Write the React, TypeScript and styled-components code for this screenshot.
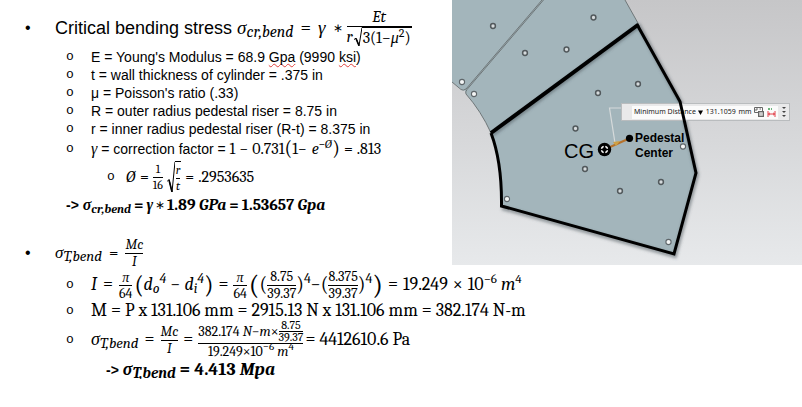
import React from 'react';
import styled, { createGlobalStyle } from 'styled-components';

const sans = '"Liberation Sans", Arial, sans-serif';
const serif = 'Cambria, Caladea, "Liberation Serif", serif';

const GlobalStyle = createGlobalStyle`
  *, *::before, *::after { box-sizing: border-box; }
  body { margin: 0; background: #fff; color: #000; font-family: ${sans}; }
`;

/* ---------- page ---------- */

const Page = styled.main`
  display: flex;
  flex-direction: column;
`;

const Top = styled.div`
  display: grid;
  grid-template-columns: minmax(452px, 56%) 1fr;
`;

const Notes = styled.ul`
  display: flex;
  flex-direction: column;
  margin: 0;
  padding: 8px 0 0 25px;
  list-style: none;
`;

const Details = styled.ul<{ $indent: number }>`
  margin: 0;
  padding: 0 0 0 ${p => p.$indent}px;
  list-style: none;
`;

const Item = styled.li<{ $h: number; $size?: number; $serif?: boolean; $before?: number }>`
  display: flex;
  align-items: center;
  height: ${p => p.$h}px;
  margin-top: ${p => p.$before ?? 0}px;
  font-size: ${p => p.$size ?? 14}px;
  line-height: 18px;
  font-family: ${p => (p.$serif ? serif : sans)};
  white-space: pre;
`;

const Dot = styled.span`
  flex: 0 0 30px;
  font: 16px/18px ${sans};
`;

const Ring = styled.span<{ $w?: number }>`
  flex: 0 0 ${p => p.$w ?? 25}px;
  font: 13px/16px "Liberation Mono", monospace;
`;

const Result = styled.p<{ $indent: number; $size: number; $h: number }>`
  display: flex;
  align-items: center;
  height: ${p => p.$h}px;
  margin: 0;
  padding-left: ${p => p.$indent}px;
  font: bold ${p => p.$size}px/18px ${serif};
  white-space: pre;
`;

const Arrow = styled.span`
  font: bold 14px/18px ${sans};
`;

const Misspelt = styled.span`
  text-decoration: underline wavy #e0403c 1px;
  text-underline-offset: 1px;
  text-decoration-skip-ink: none;
`;

/* ---------- mathematics ---------- */

const Math = styled.span<{ $size: number }>`
  display: inline-flex;
  align-items: center;
  font-family: ${serif};
  font-size: ${p => p.$size}px;
  line-height: 18px;
`;

const Sub = styled.sub<{ $size?: number }>`
  font-size: ${p => p.$size ?? 15}px;
  line-height: 0;
  vertical-align: -3px;
`;

const Sup = styled.sup<{ $size?: number }>`
  font-size: ${p => p.$size ?? 13}px;
  line-height: 0;
`;

const Op = styled.span<{ $gap?: number }>`
  margin: 0 ${p => p.$gap ?? 4}px;
  font-style: normal;
`;

const Star = styled.span<{ $gap?: number }>`
  margin: 0 ${p => p.$gap ?? 4}px;
  font-size: 12px;
  font-weight: normal;
`;

const Gap = styled.span<{ $w: number }>`
  width: ${p => p.$w}px;
`;

const Fraction = styled.span<{ $size: number; $line: number }>`
  display: inline-flex;
  flex-direction: column;
  align-items: stretch;
  text-align: center;
  font-size: ${p => p.$size}px;
  line-height: ${p => p.$line}px;
`;

const Over = styled.span`
  display: flex;
  justify-content: center;
  align-items: center;
  border-bottom: 1px solid #000;
`;

const Under = styled.span`
  display: flex;
  justify-content: center;
  align-items: center;
`;

const Paren = styled.span<{ $size: number }>`
  font-size: ${p => p.$size}px;
  line-height: 18px;
  font-style: normal;
  font-weight: normal;
`;

const Root = styled.span`
  display: inline-flex;
  align-items: stretch;
`;

const RootSign = styled.svg`
  width: 8px;
  height: auto;
  flex: none;
`;

const Radicand = styled.span`
  display: inline-flex;
  align-items: center;
  padding: 1px 1px 0;
  border-top: 1px solid #000;
`;

function Frac({ size, line, over, under }: { size: number; line: number; over: React.ReactNode; under: React.ReactNode }) {
  return (
    <Fraction $size={size} $line={line}>
      <Over>{over}</Over>
      <Under>{under}</Under>
    </Fraction>
  );
}

function Sqrt({ children }: { children: React.ReactNode }) {
  return (
    <Root>
      <RootSign viewBox="0 0 8 20" preserveAspectRatio="none" aria-hidden="true">
        <path d="M0 12.5 L2 11.2 L5 18.8 L8 0.5" fill="none" stroke="#000" strokeWidth="1" vectorEffect="non-scaling-stroke" />
        <path d="M2 11.5 L5 18.6" fill="none" stroke="#000" strokeWidth="1.6" vectorEffect="non-scaling-stroke" />
      </RootSign>
      <Radicand>{children}</Radicand>
    </Root>
  );
}

/* ---------- figure ---------- */

const Figure = styled.figure`
  margin: 0;
  height: 265px;
  overflow: hidden;
  background: linear-gradient(#c6c6c8, #d6d7d9 50%, #e7e9eb);
`;

const Canvas = styled.div`
  position: relative;
  width: 350px;
  height: 265px;
`;

const Layer = styled.svg`
  position: absolute;
  inset: 0;
  width: 100%;
  height: 100%;
  pointer-events: none;
`;

const MeasureBar = styled.div`
  position: absolute;
  left: 169px;
  top: 103px;
  display: flex;
  align-items: center;
  width: 169px;
  height: 18px;
  padding: 0 3px 0 2px;
  gap: 4px;
  border: 1px solid #b9bcbe;
  background: #e9e9ea;
  font: 7px/12px "Noto Sans", sans-serif;
  color: #222;
`;

const Grip = styled.span`
  flex: none;
  width: 4px;
  height: 14px;
  background: radial-gradient(circle, #a5a7a9 40%, transparent 50%) 0 0 / 2px 2px;
`;

const Fields = styled.div`
  flex: 1;
  display: flex;
  align-items: center;
  justify-content: space-between;
  height: 13px;
  padding: 0 2px;
  background: #fbfbfb;
`;

const Picker = styled.label`
  display: flex;
  align-items: center;
  gap: 2px;
`;

const Select = styled.select`
  appearance: none;
  margin: 0;
  padding: 0;
  border: 0;
  background: none;
  color: inherit;
  font: inherit;
`;

const IconButton = styled.button`
  display: flex;
  padding: 0;
  border: 0;
  background: none;
`;

const holes = [
  [493, 26], [525, 53], [593.5, 17.5], [566.5, 49.5], [598, 93], [575.5, 128.5], [638, 84],
  [585, 169], [620, 191], [661, 182],
];
const cornerHoles = [[462, 82], [474, 94], [507, 199], [683, 146.5], [668.5, 242]];

function Drawing() {
  return (
    <Figure>
      <Canvas>
        <Layer viewBox="452 0 350 265" aria-hidden="true">
          <defs>
            <filter id="shade" x="-10%" y="-10%" width="120%" height="120%">
              <feGaussianBlur stdDeviation="1.6" />
            </filter>
          </defs>
          <path d="M452 0H625L638.5 24L680 101L696 173L674 254L501.5 206Q502 165 491 133Q481 111 466 94L465 90.500Q463 91 461 89L452 82Z" fill="#a3b5bb" />
          <path d="M452 82L461 89.500Q463 91 466 89L542 0M543.500 0L467 89.500Q465 92 466 94Q481 111 491 133M625 0L638.500 24" fill="none" stroke="#6f7779" strokeWidth="1" />
          <path d="M492 135L639 26L681 103L697 175L675 256L502 208" fill="none" stroke="#4d585c" strokeOpacity=".55" strokeWidth="4" filter="url(#shade)" />
          {holes.map(([x, y]) => (
            <circle key={`${x}-${y}`} cx={x} cy={y} r="2.400" fill="#d5dadc" stroke="#52595c" strokeWidth="1.500" />
          ))}
          {cornerHoles.map(([x, y]) => (
            <circle key={`${x}-${y}`} cx={x} cy={y} r="2.600" fill="#f4f6f6" stroke="#5f666a" strokeWidth="1.100" />
          ))}
          <path d="M622 108H609.500L615 143" fill="none" stroke="#d6dadb" strokeWidth="1.200" />
        </Layer>
        <MeasureBar>
          <Grip />
          <Fields>
            <Picker>
              <Select aria-label="Measurement">
                <option>Minimum Distance</option>
              </Select>
              <svg width="5" height="5" viewBox="0 0 5 5" aria-hidden="true"><path d="M0 .5H5L2.500 5Z" fill="#000" /></svg>
            </Picker>
            <span>131.1059</span>
            <span>mm</span>
            <IconButton aria-label="Copy value">
              <svg width="10" height="10" viewBox="0 0 10 10" fill="none" stroke="#666">
                <path d="M.5 .5H8.500V5.500H.5ZM2 4V2H4M5.500 2H7" />
                <rect x="4.500" y="4.500" width="5" height="5" fill="#aaa" />
                <path d="M5 7H9M7 5V9" stroke="#eee" strokeWidth=".6" />
              </svg>
            </IconButton>
            <IconButton aria-label="Show dimension">
              <svg width="9" height="9" viewBox="0 0 9 9" fill="none">
                <path d="M1 3V9M8 3V9M1 6H8M3 4.800L1.500 6L3 7.200M6 4.800L7.500 6L6 7.200" stroke="#e2414b" />
                <path d="M1 1H3M4 1H5" stroke="#3d9a50" strokeWidth="1.400" />
              </svg>
            </IconButton>
          </Fields>
          <svg width="4" height="12" viewBox="0 0 4 12" aria-hidden="true">
            <path d="M0 1H4L2 3ZM0 5H4L2 7ZM0 9H4L2 11Z" fill="#444" />
          </svg>
        </MeasureBar>
        <Layer viewBox="452 0 350 265" role="img" aria-label="Panel with centre of gravity and pedestal centre">
          <path d="M491 133L638.500 24.500" stroke="#000" strokeWidth="4" />
          <path d="M637 24.500L680 101.500L696 173L674 254L501.500 206Q502 162 491 133" fill="none" stroke="#000" strokeWidth="3" />
          <path d="M609 147.500L628 139" stroke="#b5722d" strokeWidth="2" />
          <path d="M613 142L620 141L616 146Z" fill="#cfa144" />
          <circle cx="604.500" cy="149.500" r="6.700" />
          <circle cx="604.500" cy="149.500" r="3" fill="none" stroke="#fff" strokeWidth="1.400" />
          <path d="M604.500 145V154M600 149.500H609" stroke="#000" strokeWidth="1.600" />
          <circle cx="629.500" cy="138.300" r="3.600" />
          <g fontFamily="Liberation Sans, Arial, sans-serif">
            <text x="564" y="158" fontSize="20">CG</text>
            <text x="635" y="142" fontSize="12" fontWeight="bold">Pedestal</text>
            <text x="635" y="157" fontSize="12" fontWeight="bold">Center</text>
          </g>
        </Layer>
      </Canvas>
    </Figure>
  );
}

/* ---------- content ---------- */

export default function App() {
  return (
    <>
      <GlobalStyle />
      <Page>
        <Top>
          <Notes>
            <Item $h={40} $size={18}>
              <Dot>•</Dot>
              {'Critical bending stress '}
              <Math $size={19}>
                <i>σ<Sub $size={16}>cr,bend</Sub></i>
                <Op $gap={7}>=</Op><i>γ</i><Gap $w={3} /><Star>∗</Star>
                <Frac size={16} line={17}
                  over={<i>Et</i>}
                  under={<><i>r</i><Gap $w={1} /><Sqrt><span>3(1−<i>μ</i><Sup $size={12}>2</Sup>)</span></Sqrt></>}
                />
              </Math>
            </Item>
            <li>
              <Details $indent={41}>
                <Item $h={18}><Ring>o</Ring><span>E = Young's Modulus = 68.9 <Misspelt>Gpa</Misspelt> (9990 <Misspelt>ksi</Misspelt>)</span></Item>
                <Item $h={18}><Ring>o</Ring>t = wall thickness of cylinder = .375 in</Item>
                <Item $h={18}><Ring>o</Ring>μ = Poisson's ratio (.33)</Item>
                <Item $h={18}><Ring>o</Ring>R = outer radius pedestal riser = 8.75 in</Item>
                <Item $h={18}><Ring>o</Ring>r = inner radius pedestal riser (R-t) = 8.375 in</Item>
                <Item $h={22}>
                  <Ring>o</Ring>
                  <Math $size={16}><i>γ</i></Math>
                  {' = correction factor = '}
                  <Math $size={16}>
                    1<Op>−</Op>0.731<Paren $size={20}>(</Paren>1−<Gap $w={5} /><i>e<Sup $size={12}>−Ø</Sup></i><Paren $size={20}>)</Paren>
                    <Op>=</Op>.813
                  </Math>
                </Item>
                <li>
                  <Details $indent={41}>
                    <Item $h={34}>
                      <Ring $w={19}>o</Ring>
                      <Math $size={16}>
                        <i>Ø</i><Op>=</Op>
                        <Frac size={12} line={15} over="1" under="16" /><Gap $w={4} />
                        <Sqrt><Frac size={12} line={15} over={<i>r</i>} under={<i>t</i>} /></Sqrt>
                        <Op>=</Op>.2953635
                      </Math>
                    </Item>
                  </Details>
                  <Result $indent={0} $size={16} $h={22}>
                    <Arrow>{'-> '}</Arrow>
                    <i>σ<Sub $size={12}>cr,bend</Sub></i><Op $gap={3}>=</Op><i>γ</i><Star $gap={2}>∗</Star>1.89 <i>GPa</i><Op $gap={3}>=</Op>1.53657 <i>Gpa</i>
                  </Result>
                </li>
              </Details>
            </li>
            <Item $h={30} $before={22} $size={18}>
              <Dot>•</Dot>
              <Math $size={17}>
                <i>σ<Sub>T,bend</Sub></i><Op $gap={7}>=</Op>
                <Frac size={14} line={16} over={<i>Mc</i>} under={<i>I</i>} />
              </Math>
            </Item>
          </Notes>
          <Drawing />
        </Top>
        <Details $indent={66}>
          <Item $h={34} $serif $size={18}>
            <Ring>o</Ring>
            <Math $size={18}>
              <i>I</i><Op $gap={6}>=</Op>
              <Frac size={14} line={15} over={<i>π</i>} under="64" /><Gap $w={2} />
              <Paren $size={24}>(</Paren><i>d<Sub $size={14}>o</Sub><Sup $size={14}>4</Sup></i><Op>−</Op>
              <i>d<Sub $size={14}>i</Sub><Sup $size={14}>4</Sup></i><Paren $size={24}>)</Paren><Op $gap={5}>=</Op>
              <Frac size={14} line={15} over={<i>π</i>} under="64" /><Gap $w={2} />
              <Paren $size={28}>(</Paren><Paren $size={20}>(</Paren>
              <Frac size={14} line={16} over="8.75" under="39.37" />
              <Paren $size={20}>)</Paren><span><Sup $size={14}>4</Sup>−</span><Paren $size={20}>(</Paren>
              <Frac size={14} line={16} over="8.375" under="39.37" />
              <Paren $size={20}>)</Paren><span><Sup $size={14}>4</Sup></span><Paren $size={28}>)</Paren>
              <Op $gap={5}>=</Op>19.249<Op $gap={5}>×</Op><span>10<Sup>−6</Sup> <i>m</i><Sup>4</Sup></span>
            </Math>
          </Item>
          <Item $h={17} $serif $size={18}>
            <Ring>o</Ring>M = P x 131.106 mm = 2915.13 N x 131.106 mm = 382.174 N-m
          </Item>
          <Item $h={42} $serif $size={18}>
            <Ring>o</Ring>
            <Math $size={18}>
              <i>σ<Sub>T,bend</Sub></i><Op $gap={6}>=</Op>
              <Frac size={14} line={16} over={<i>Mc</i>} under={<i>I</i>} /><Op $gap={5}>=</Op>
              <Frac size={14} line={16}
                over={<><span>382.174 <i>N</i>−<i>m</i>×</span><Frac size={12} line={11} over="8.75" under="39.37" /></>}
                under={<span>19.249×10<Sup $size={11}>−6</Sup> <i>m</i><Sup $size={11}>4</Sup></span>}
              />
              <Gap $w={2} />= 4412610.6 Pa
            </Math>
          </Item>
          <li>
            <Result $indent={40} $size={18} $h={18}>
              <Arrow>{'-> '}</Arrow>
              <i>σ<Sub $size={15}>T,bend</Sub></i><Op>=</Op>4.413 <i>Mpa</i>
            </Result>
          </li>
        </Details>
      </Page>
    </>
  );
}
